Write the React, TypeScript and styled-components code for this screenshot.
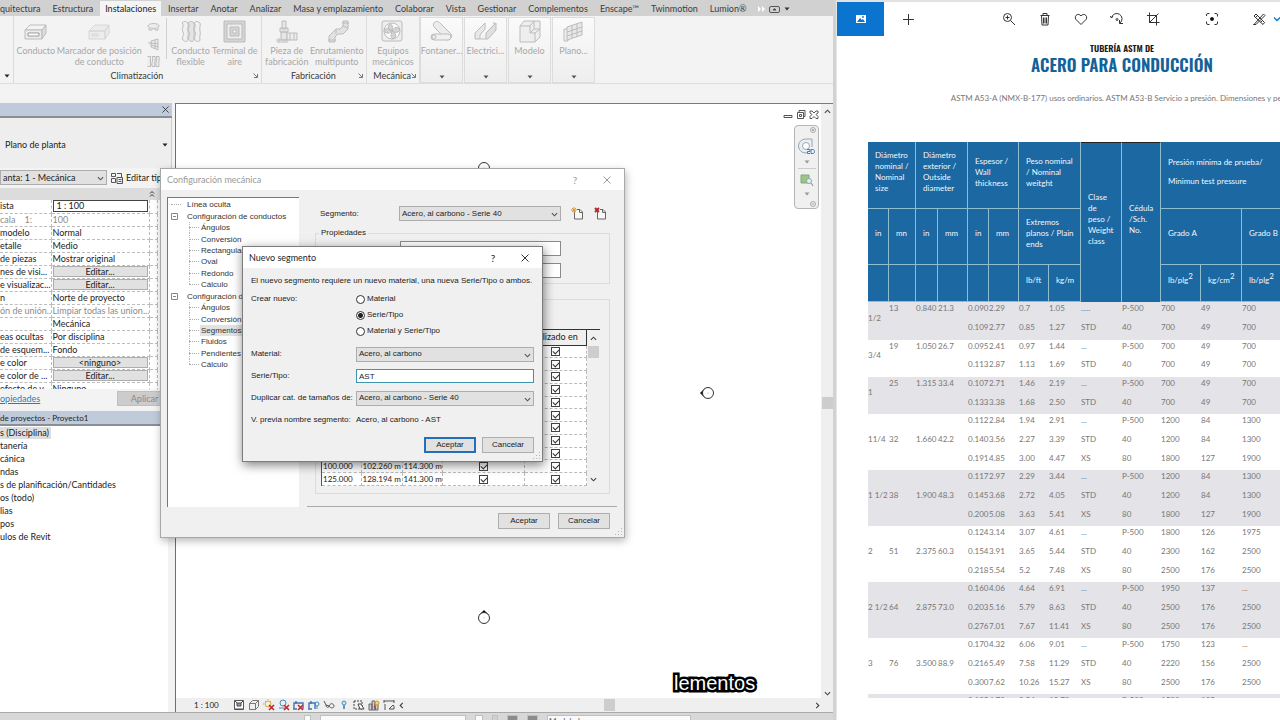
import React from 'react';
import styled, { createGlobalStyle, css } from 'styled-components';

const UI = '"Lato", "Open Sans", sans-serif';
const DIALOG = '"Liberation Sans", sans-serif';
const DOC = '"Lato", "Open Sans", sans-serif';

const Global = createGlobalStyle`
  * { box-sizing: border-box; }
  body { margin: 0; background: #fff; overflow: hidden; }
  button, input, select { font: inherit; color: inherit; margin: 0; padding: 0; border-radius: 0; }
  button { background: none; border: 0; white-space: nowrap; }
  fieldset { margin: 0; padding: 0; min-width: 0; }
  svg { display: block; flex: none; }
`;

const Desktop = styled.div`
  position: relative;
  display: grid;
  grid-template-columns: minmax(0, 836fr) minmax(0, 444fr);
  height: 100vh;
  overflow: hidden;
`;

/* ---------- Revit window ---------- */

const Revit = styled.div`
  display: flex;
  flex-direction: column;
  min-height: 0;
  background: #f3f3f3;
  border-right: 3px solid #d2d2d2;
  font: 9px/12px ${UI};
  color: #222;
  overflow: hidden;
`;

const Tabs = styled.nav`
  display: flex;
  height: 16px;
  flex: none;
  background: #d1d1d1;
  color: #3c3c3c;
`;

const Tab = styled.button<{ $active?: boolean; $first?: boolean }>`
  padding: 2px ${(p) => (p.$active ? 5 : 6)}px 0;
  ${(p) => p.$first && css`padding-left: 0;`}
  margin: ${(p) => (p.$active ? '1px 1px 0' : '0')};
  ${(p) => p.$active && css`background: #f4f4f4; padding-top: 1px; color: #222;`}
`;

const TabTools = styled.div`
  display: flex;
  align-items: center;
  gap: 4px;
  padding: 2px 0 0 6px;
`;

const RibbonBody = styled.div`
  display: flex;
  flex: none;
  height: 68px;
  border-bottom: 1px solid #dedede;
`;

const Panel = styled.section<{ $w: number }>`
  width: ${(p) => p.$w}px;
  flex: none;
  display: flex;
  flex-direction: column;
  border-right: 1px solid #dcdcdc;
`;

const PanelTools = styled.div`
  display: flex;
  flex: 1;
  padding: 4px 2px 0;
`;

const PanelTitle = styled.div`
  display: grid;
  grid-template-columns: 1fr auto 1fr;
  align-items: center;
  height: 13px;
  padding: 0 3px 0 2px;
  margin-bottom: 1px;
  color: #3a3a3a;
  white-space: nowrap;
  svg { justify-self: end; }
`;

const Tool = styled.button<{ $w: number }>`
  width: ${(p) => p.$w}px;
  display: flex;
  flex-direction: column;
  align-items: center;
  color: #a8a8a8;
  line-height: 11px;
  span { margin-top: 1px; white-space: pre; }
`;

const SmallTools = styled.div`
  width: 22px;
  display: flex;
  flex-direction: column;
  align-items: center;
  gap: 4px;
  padding-top: 1px;
`;

const ToolDivider = styled.div`
  width: 1px;
  margin: -2px 4px 10px 1px;
  background: #cfcfcf;
`;

const FoldedPanel = styled.button`
  width: 43px;
  margin: 1px 1px 0 0;
  border: 1px solid #dcdcdc;
  background: linear-gradient(#fafafa, #eeeeee);
  display: flex;
  flex-direction: column;
  align-items: center;
  padding: 2px 0 3px;
  color: #a8a8a8;
  line-height: 11px;
  span { margin: 1px 0 auto; }
`;

const Workspace = styled.div`
  flex: 1;
  min-height: 0;
  margin-top: 19px;
  display: flex;
`;

const Sidebar = styled.aside`
  width: 172px;
  flex: none;
  margin-right: 3px;
  display: flex;
  flex-direction: column;
  overflow: hidden;
  white-space: nowrap;
`;

const PaletteTitle = styled.div`
  height: 15px;
  flex: none;
  display: flex;
  align-items: center;
  justify-content: space-between;
  padding-right: 3px;
  background: #bfcbdb;
  border-bottom: 2px solid #8a8f96;
  font-size: 8px;
`;

const TypeSelector = styled.button`
  height: 50px;
  flex: none;
  display: flex;
  align-items: center;
  justify-content: space-between;
  padding: 4px 3px 0 5px;
  border-right: 1px solid #ccc;
  background: #eee;
`;

const InstanceRow = styled.div`
  display: flex;
  align-items: center;
  height: 20px;
  flex: none;
  background: #f3f3f3;
`;

const InstanceBox = styled.div`
  width: 107px;
  height: 16px;
  margin-right: 4px;
`;

const EditType = styled.button`
  display: flex;
  align-items: center;
  gap: 3px;
`;

const GroupBar = styled.div`
  height: 12px;
  flex: none;
  width: 160px;
  display: flex;
  align-items: center;
  justify-content: flex-end;
  padding-right: 5px;
  background: #dcdcdc;
`;

const PropertyArea = styled.div`
  height: 189px;
  flex: none;
  overflow: hidden;
  background: #fff;
`;

const PropertyTable = styled.table`
  width: 158px;
  table-layout: fixed;
  border-collapse: collapse;
  tr { height: 13px; }
  th, td {
    padding: 0 1px;
    font-weight: normal;
    text-align: left;
    line-height: 12px;
    border: 1px dashed #bdbdbd;
    border-left: 0;
    border-top: 0;
    overflow: hidden;
  }
  th { padding: 0; }
`;

const Dim = styled.span`
  color: #8b8b8b;
  white-space: pre;
`;

const PropertyButton = styled.button`
  display: block;
  width: 100%;
  height: 11px;
  line-height: 9px;
  border: 1px solid #adadad;
  background: #e1e1e1;
`;

const ScaleBox = styled.div`
  height: 12px;
  line-height: 10px;
  border: 1px solid #444;
  padding-left: 3px;
`;

const PaletteFooter = styled.div`
  height: 19px;
  flex: none;
  display: flex;
  align-items: center;
  justify-content: space-between;
  a { color: #2b7cb5; }
`;

const Apply = styled.button`
  width: 55px;
  height: 15px;
  background: #cccccc;
  border: 1px solid #bfbfbf;
  color: #8a8a8a;
`;

const BrowserTitle = styled(PaletteTitle)`
  margin-top: 3px;
`;

const BrowserTree = styled.ul`
  flex: 1;
  margin: 0 4px 0 0;
  padding: 1px 0 0;
  list-style: none;
  background: #fff;
  li { height: 13px; line-height: 12px; }
`;

const Selected = styled.span`
  display: inline-block;
  background: #dedede;
  padding-right: 2px;
`;

const View = styled.main`
  flex: 1;
  min-width: 0;
  display: grid;
  grid-template-columns: 1fr 12px;
  grid-template-rows: 1fr 14px;
  border-left: 1px solid #6e6e6e;
  border-top: 1px solid #7a7a7a;
  background: #efefef;
`;

const Canvas = styled.div`
  position: relative;
  background: #fff;
  overflow: hidden;
`;

const Marker = styled.svg<{ $x: number; $y: number }>`
  position: absolute;
  left: ${(p) => p.$x}px;
  top: ${(p) => p.$y}px;
`;

const ViewWindowTools = styled.div`
  position: absolute;
  top: 6px;
  right: 2px;
  display: flex;
  gap: 3px;
`;

const NavBar = styled.div`
  position: absolute;
  top: 21px;
  right: 2px;
  width: 25px;
  height: 84px;
  display: flex;
  flex-direction: column;
  align-items: center;
  justify-content: space-between;
  padding: 1px 2px;
  border: 1px solid #b5b5b5;
  border-radius: 4px;
  background: #f0f0f0;
  hr { width: 18px; margin: 0; border: 0; border-top: 1px solid #ccc; }
`;

const Corner = styled.div`
  align-self: flex-end;
  line-height: 0;
`;

const VScroll = styled.div`
  display: flex;
  flex-direction: column;
  justify-content: space-between;
  align-items: center;
  padding: 4px 0 1px;
`;

const Thumb = styled.div`
  width: 11px;
  height: 12px;
  background: #cdcdcd;
`;

const ViewControls = styled.div`
  display: flex;
  align-items: center;
  gap: 3px;
  padding-left: 18px;
`;

const ViewScale = styled.span`
  width: 36px;
  font-size: 8px;
`;

const HScroll = styled.div`
  flex: 1;
  display: flex;
  align-items: center;
  justify-content: space-between;
`;

const StatusBar = styled.footer`
  height: 8px;
  flex: none;
  display: flex;
  gap: 9px;
  padding: 2px 0 0 304px;
  border-top: 1px solid #a9a9a9;
  background: #d8d8d8;
  overflow: hidden;
`;

const StatusField = styled.div<{ $w: number; $c?: string }>`
  width: ${(p) => p.$w}px;
  flex: none;
  background: ${(p) => p.$c || '#fafafa'};
  border: 1px solid #c0c0c0;
  border-bottom: 0;
  font-size: 8px;
  line-height: 10px;
  color: #555;
  padding-left: 1px;
`;

/* ---------- Dialogs ---------- */

const Dialog = styled.section<{ $front?: boolean }>`
  position: absolute;
  left: ${(p) => (p.$front ? 242 : 160)}px;
  top: ${(p) => (p.$front ? 246 : 168)}px;
  width: ${(p) => (p.$front ? 301 : 465)}px;
  height: ${(p) => (p.$front ? 216 : 370)}px;
  display: flex;
  flex-direction: column;
  border: 1px solid ${(p) => (p.$front ? '#7c7c7c' : '#a8a8a8')};
  background: #f0f0f0;
  box-shadow: 1px 3px ${(p) => (p.$front ? '10px rgba(0,0,0,0.5)' : '8px rgba(0,0,0,0.28)')};
  font: 8px/12px ${DIALOG};
  color: #222;
  white-space: nowrap;
`;

const DialogTitle = styled.header<{ $dim?: boolean }>`
  height: 21px;
  flex: none;
  display: flex;
  align-items: center;
  padding: 0 12px 0 6px;
  background: #fff;
  color: ${(p) => (p.$dim ? '#999' : '#222')};
  font: 9px/12px ${UI};
  h2 { font: inherit; margin: 0 auto 0 0; }
  button { display: flex; justify-content: center; width: 10px; font-size: 10px; }
  button + button { margin-left: 22px; }
`;

const ConfigBody = styled.div`
  flex: 1;
  display: grid;
  grid-template-columns: 132px 1fr;
  gap: 8px;
  padding: 7px 7px 0 6px;
`;

const Tree = styled.ul`
  height: 310px;
  margin: 0;
  padding: 1px 0 0;
  list-style: none;
  line-height: 11px;
  background: #fff;
  border: solid #777;
  border-width: 1px 0 0 1px;
  display: grid;
  grid-template-rows: repeat(15, minmax(0, 171fr)) 2040fr;
`;

const TreeItem = styled.li<{ $depth: number; $sel?: boolean; $last?: boolean }>`
  display: flex;
  align-items: center;
  padding-left: ${(p) => (p.$depth === 2 ? 21 : 3)}px;
  color: #333;
  &::before {
    content: '';
    width: ${(p) => (p.$depth === 1 ? 0 : 10)}px;
    margin-right: ${(p) => (p.$depth === 0 ? 5 : p.$depth === 2 ? 1 : 0)}px;
    border-top: 1px dotted #aaa;
  }
  ${(p) => p.$depth === 2 && css`
    background: repeating-linear-gradient(#bbb 0 1px, #fff 1px 2px) 21px 0 / 1px ${p.$last ? '50%' : '100%'} no-repeat;
  `}
  span { padding: 0 1px; ${(p) => p.$sel && css`background: #e2e2e2;`} }
  svg { margin-right: 6px; }
`;

const ConfigForm = styled.div`
  display: flex;
  flex-direction: column;
  height: 310px;
  border-bottom: 1px solid #aaa;
`;

const SegmentRow = styled.div`
  display: grid;
  grid-template-columns: 79px 162px auto auto;
  align-items: center;
  justify-content: start;
  height: 15px;
  flex: none;
  margin: 9px 0 6px 13px;
  button { margin-left: 10px; }
`;

const Group = styled.fieldset<{ $h: number }>`
  margin: 0 7px 15px 8px;
  height: ${(p) => p.$h}px;
  flex: none;
  border: 1px solid #dcdcdc;
  legend { padding: 0 2px; margin-left: 3px; height: 12px; }
`;

const GroupFields = styled.div`
  display: grid;
  gap: 7px;
  padding: 2px 48px 0 84px;
`;

const Field = styled.input<{ $focus?: boolean }>`
  display: block;
  width: 100%;
  height: ${(p) => (p.$focus ? 14 : 15)}px;
  border: 1px solid ${(p) => (p.$focus ? '#3d96ad' : '#8a8a8a')};
  padding-left: 2px;
  background: #fff;
  outline: 0;
`;

const SelectWrap = styled.span`
  position: relative;
  display: block;
  height: 15px;
  select {
    display: block;
    width: 100%;
    height: 100%;
    appearance: none;
    border: 1px solid #adadad;
    background: #e1e1e1;
    padding: 0 14px 0 2px;
    line-height: 12px;
  }
  svg { position: absolute; right: 3px; top: 5px; }
`;

const SizeGrid = styled.div`
  display: flex;
  height: 157px;
  margin: 29px 9px 0 5px;
  border-top: 1px solid #333;
  border-left: 1px solid #555;
`;

const SizeTable = styled.table`
  flex: 1;
  width: 100%;
  height: 156px;
  table-layout: fixed;
  border-collapse: collapse;
  background: #fff;
  th {
    height: 15px;
    padding: 0 0 0 16px;
    background: #f0f0f0;
    font: 9px/12px ${UI};
    text-align: left;
    border-bottom: 1px solid #333;
    border-right: 1px solid #333;
  }
  td {
    height: 12px;
    padding: 0 0 0 1px;
    font: 8px/11px ${UI};
    border-right: 1px dashed #bbb;
    border-bottom: 1px dashed #bbb;
    overflow: hidden;
  }
`;

const Check = styled.input`
  display: block;
  appearance: none;
  width: 9px;
  height: 9px;
  margin: 0 auto;
  border: 1px solid #444;
  background: #fff;
  position: relative;
  &:checked::after {
    content: '';
    position: absolute;
    left: 1px;
    top: 1px;
    width: 5px;
    height: 3px;
    border: solid #333;
    border-width: 0 0 1px 1px;
    transform: rotate(-45deg);
  }
`;

const GridScroll = styled.div`
  width: 13px;
  flex: none;
  display: flex;
  flex-direction: column;
  align-items: center;
  padding: 5px 0 3px;
  svg + div { margin: 4px 0 auto; }
`;

const Buttons = styled.div<{ $front?: boolean }>`
  display: flex;
  justify-content: flex-end;
  gap: ${(p) => (p.$front ? 6 : 8)}px;
  padding: ${(p) => (p.$front ? '0 8px 8px 0' : '0 14px 8px 0')};
`;

const PushButton = styled.button<{ $primary?: boolean }>`
  width: 52px;
  height: 16px;
  background: #e1e1e1;
  border: ${(p) => (p.$primary ? '2px solid #2270b8' : '1px solid #adadad')};
`;

const Grip = styled.svg`
  position: absolute;
  right: 1px;
  bottom: 1px;
`;

const SegmentBody = styled.form`
  flex: 1;
  padding: 7px 8px 0;
`;

const Line = styled.div`
  display: grid;
  grid-template-columns: 105px 1fr;
  align-items: center;
  height: 22px;
`;

const RadioRow = styled.div`
  display: grid;
  grid-template-columns: 105px 1fr;
  height: 56px;
  padding-top: 6px;
`;

const Radios = styled.div`
  display: grid;
  grid-auto-rows: 16px;
`;

const RadioLabel = styled.label`
  display: flex;
  align-items: center;
  gap: 2px;
  height: 12px;
  input {
    appearance: none;
    width: 9px;
    height: 9px;
    border: 1px solid #333;
    border-radius: 50%;
    background: #fff;
  }
  input:checked { background: radial-gradient(circle, #222 0 2px, #fff 3px); }
`;

/* ---------- Photo viewer ---------- */

const Photos = styled.div`
  display: flex;
  flex-direction: column;
  min-height: 0;
  border-top: 2px solid #e2e2e2;
  border-left: 1px solid #e6e6e6;
  background: #fff;
  overflow: hidden;
  padding-bottom: 22px;
`;

const PhotoBar = styled.div`
  height: 34px;
  flex: none;
  display: flex;
  align-items: center;
  color: #222;
`;

const PhotoButton = styled.button<{ $w: number; $home?: boolean }>`
  width: ${(p) => p.$w}px;
  flex: none;
  height: 34px;
  display: flex;
  align-items: center;
  justify-content: center;
  ${(p) => p.$home && css`background: #0a74cf; margin-right: 6px;`}
`;

const BarSpace = styled.div<{ $w: number }>`width: ${(p) => p.$w}px; flex: none;`;

const Sheet = styled.article`
  width: 508px;
  margin-left: 31px;
  min-height: 0;
  overflow: hidden;
  font: 8px/11px ${DOC};
  color: #777;
  text-align: center;
`;

const Kicker = styled.p`
  margin: 6px 0 0;
  font: 600 9px/12px "Oswald", "Open Sans Condensed", "Roboto Condensed", ${DIALOG};
  color: #1c1c1c;
`;

const Headline = styled.h1`
  margin: 0;
  font: 600 17px/22px "Oswald", "Open Sans Condensed", "Roboto Condensed", ${DIALOG};
  color: #14629a;
`;

const Intro = styled.p`
  margin: 16px 0 38px;
  line-height: 12px;
  white-space: nowrap;
`;

const SpecTable = styled.table`
  width: 508px;
  table-layout: fixed;
  border-collapse: separate;
  border-spacing: 0;
  text-align: left;
  th {
    padding: 0 2px 6px 7px;
    background: #1b68a3;
    color: #f2f7fb;
    font-weight: normal;
    border-right: 1px solid #8fbfcf;
    border-bottom: 1px solid #8fbfcf;
  }
  th p { margin: 0 0 8px; }
  sup { font-size: 8px; line-height: 0; }
  tbody tr { height: 19px; }
  tbody tr:nth-child(3n) { height: 18px; }
  td { padding: 0; line-height: 12px; vertical-align: top; white-space: nowrap; }
`;

const HeadRow = styled.tr<{ $h: number }>`
  height: ${(p) => p.$h}px;
`;

const Row = styled.tr<{ $shade: boolean }>`
  background: ${(p) => (p.$shade ? '#e3e3e8' : '#fff')};
`;

const SpanCell = styled.td<{ $mid: boolean }>`
  && { ${(p) => p.$mid && css`vertical-align: middle; padding-bottom: 7px;`} }
`;

const TallHead = styled.th`
  && { border-top: 1px solid #222; border-bottom: 0; }
`;

const Caption = styled.div`
  position: absolute;
  left: 674px;
  bottom: 25px;
  font: 20px/24px "Liberation Sans", sans-serif;
  color: #fff;
  -webkit-text-stroke: 5px #000;
  paint-order: stroke fill;
`;

/* ---------- Drawings ---------- */

const Chevron = ({ dir = 'down', c = '#444', s = 7 }: { dir?: string; c?: string; s?: number }) => {
  const d: Record<string, string> = {
    down: 'M1 2.5 4 5.5 7 2.5', up: 'M1 5.5 4 2.5 7 5.5', left: 'M5.5 1 2.5 4 5.5 7', right: 'M2.5 1 5.5 4 2.5 7',
  };
  return <svg width={s} height={s} viewBox="0 0 8 8" fill="none" stroke={c} strokeWidth="1.3"><path d={d[dir]} /></svg>;
};

const Caret = ({ c = '#555' }: { c?: string }) => (
  <svg width="6" height="4" viewBox="0 0 6 4"><path d="M0.5 0.5h5L3 3.5z" fill={c} /></svg>
);

const Cross = ({ c = '#333', s = 8 }: { c?: string; s?: number }) => (
  <svg width={s} height={s} viewBox="0 0 8 8" stroke={c} strokeWidth="1"><path d="M0.5 0.5 7.5 7.5M7.5 0.5 0.5 7.5" /></svg>
);

const Launcher = () => (
  <svg width="5" height="5" viewBox="0 0 5 5" stroke="#777" fill="none"><path d="M0.5 0.5 4 4M4.5 1v3.5H1" /></svg>
);

const ribbonArt: Record<string, React.ReactNode> = {
  duct: <><path d="M1 10 6 5h16l-4 5z" fill="#f4f4f4" /><path d="M1 10h17v9H1z" fill="#ececec" /><path d="M18 10l4-5v8l-4 6z" fill="#ddd" /><path d="M4 13h11v3H4z" fill="#fff" stroke="#999" /></>,
  marker: <g opacity="0.5"><path d="M2 11 8 5h14l-4 6zM2 11h16v8H2zM18 11l4-6v8l-4 6z" fill="#e6e6e6" /><path d="M5 14h6v2H5z" /></g>,
  flex: <><path d="M3 3c3 3-1 5 1 9s-2 5 0 8c2 2 4 2 5 0-1-4 1-5 0-9s1-5 0-8C7 1 5 1 3 3z" fill="#f0f0f0" /><path d="M9 3c3 3-1 5 1 9s-2 5 0 8c2 2 4 2 5 0-1-4 1-5 0-9s1-5 0-8c-2-2-4-2-6 0z" fill="#e4e4e4" /><path d="M15 3c3 3-1 5 1 9s-2 5 0 8c2 2 4 2 5 0-1-4 1-5 0-9s1-5 0-8c-2-2-4-2-6 0z" fill="#f0f0f0" /></>,
  terminal: <><path d="M1 1h21v21H1z" fill="#d4d4d4" /><path d="M4 4h15v15H4z" fill="#eee" /><path d="M7 7h9v9H7z" fill="#d4d4d4" /><path d="M10 10h3v3h-3z" fill="#fff" /></>,
  piece: <><path d="M7 1h4v8H7zM5 8h8v4H5zM6 12h6v8H6z" fill="#e6e6e6" /><path d="M12 13h10v7H12z" fill="#eee" /><path d="M15 13v7M19 13v7M1 20h13M2 22h11M4 18v4" /></>,
  route: <><path d="M18 1h5v8l-5 5h-5l-3 3v5H4v-6l7-7h4l3-3z" fill="#e2e2e2" /><path d="M17 3h7M3 20h8M11 9v5M18 6l5 2" /></>,
  fan: <><rect x="1" y="1" width="20" height="20" rx="2" fill="#eee" /><circle cx="11" cy="11" r="8" fill="#fafafa" /><path d="M11 11c-4-1-5-5-2-7 3 1 3 4 2 7 2-4 6-5 8-1-2 3-5 3-8 1 4 2 5 6 1 8-3-2-2-5-1-8-3 3-7 3-8-1 2-2 5-2 8 1z" fill="#d4d4d4" /></>,
  pipe: <><path d="M4 3c2-3 5-1 6 0l11 11c2 3-1 6-4 6L5 8C3 6 3 4 4 3z" fill="#ececec" /><path d="M4 14h14a3 3 0 0 1 0 6H4a3 3 0 0 1 0-6z" fill="#f0f0f0" /><circle cx="4" cy="17" r="2" /></>,
  tray: <><path d="M1 13 11 3v6L6 15v4H1z" fill="#e8e8e8" /><path d="M6 19h6l9-11V3h-2" fill="#f2f2f2" /><path d="M12 19V13L22 3v7l-8 9z" fill="#e0e0e0" /></>,
  box: <><path d="M2 6 6 1h16v16l-5 5H2z" fill="#eee" /><path d="M2 6h10v7h5v9M12 6l4-5M12 13l4-4h6M16 1v8M17 13l5-4" /></>,
  plane: <><path d="M2 9h4v12H2z" fill="#eee" /><path d="M5 7 20 2v13L5 20z" fill="#e8e8e8" /><path d="M10 5v13M15 4v13M5 12l15-5M5 16l15-5" /></>,
};

const RibbonIcon = ({ name }: { name: string }) => (
  <svg width="24" height="24" viewBox="0 0 24 24" fill="none" stroke="#bcbcbc" strokeWidth="1">{ribbonArt[name]}</svg>
);

const SmallIcon = ({ kind }: { kind: number }) => (
  <svg width="13" height="13" viewBox="0 0 13 13" fill="#ececec" stroke="#bcbcbc">
    {kind === 0 && <><ellipse cx="6.5" cy="5" rx="5.5" ry="2.500" /><path d="M2 7v2h3V8M11 7v2H8V8" /></>}
    {kind === 1 && <path d="M4 3l7-2v11L4 9zM1 5h4M4 5l7 1M4 7l7 2M8 2v9" />}
    {kind === 2 && <path d="M0.500 1.500h3v10h-3M5 1.500c2 3-1 6 0 10h3c-1-4 1-7 0-10zM9 1.500c2 3-1 6 0 10h3c-1-4 1-7 0-10z" />}
  </svg>
);

const viewArt: React.ReactNode[] = [
  <><path d="M1.500 1.500h9v9h-9z" fill="#fff" stroke="#555" /><path d="M2 2l2 2M10 2 8 4M2 10h8M4 4h4v3H4z" fill="#99a" stroke="#445" /></>,
  <path d="M1.500 4.500h6v6h-6zM1.500 4.500l3-3h6v6l-3 3M7.500 4.500l3-3" stroke="#777" />,
  <><circle cx="5" cy="5" r="3" stroke="#e2a82a" /><path d="M5 0v1M0 5h1M2 2l1 1M8 2 7 3" stroke="#e2a82a" /><path d="M6 6l5 5M11 6l-5 5" stroke="#c0282d" strokeWidth="1.6" /></>,
  <><circle cx="5" cy="4" r="3" stroke="#3f8fc4" /><path d="M1 9h7" stroke="#3f8fc4" /><path d="M6 6l5 5M11 6l-5 5" stroke="#c0282d" strokeWidth="1.6" /></>,
  <><path d="M1 10V4h9v6M0 10h4M3 2v3" stroke="#3f78b4" strokeWidth="1.4" /><path d="M5 6l5 5M10 6l-5 5" stroke="#c0282d" strokeWidth="1.6" /></>,
  <><path d="M1 10V4h6v6M0 10h4M3 2v3" stroke="#3f78b4" strokeWidth="1.4" /><circle cx="9" cy="5" r="2" stroke="#3f8fc4" /><path d="M9 7v3" stroke="#3f8fc4" /></>,
  <path d="M1 2l2 4 3 1c2-4 5-2 5 0s-3 3-5 0M3 6c0 3 3 3 3 1" stroke="#555" />,
  <><circle cx="6" cy="4" r="2" stroke="#3f8fc4" fill="#cfe6f5" /><path d="M6 6v4" stroke="#3f78b4" strokeWidth="1.5" /></>,
  <><path d="M1 2h8v8H1z" stroke="#444" strokeDasharray="2 1" /><path d="M5 5h3l3 5H7z" fill="#fff" stroke="#444" /></>,
  <><path d="M1 5h3v6H1zM4 2h3v9H4zM7 4h3v7H7z" fill="#ccc" stroke="#666" /><circle cx="9" cy="4" r="2" fill="#f6d36b" stroke="#d29a28" /><path d="M6 7l2 3" stroke="#c0282d" /></>,
  <path d="M1 2h10M1 1v3M11 1v3M2 5v6M6 10l4-4 1 1v3H6z" stroke="#555" />,
];

const Elevation = ({ x, y, rot, label }: { x: number; y: number; rot: number; label: string }) => (
  <Marker $x={x} $y={y} width="16" height="16" viewBox="0 0 16 16" role="img" aria-label={label}>
    <g transform={`rotate(${rot} 8 8)`}>
      <path d="M3 5 8 0l5 5z" fill="#111" />
      <circle cx="8" cy="8" r="5.500" fill="#fff" stroke="#333" />
      <circle cx="8" cy="8" r="0.500" fill="#888" />
    </g>
  </Marker>
);

const GripDots = () => (
  <Grip width="8" height="8" viewBox="0 0 8 8" fill="#b5b5b5">
    <path d="M6 0h1v1H6zM6 3h1v1H6zM3 3h1v1H3zM6 6h1v1H6zM3 6h1v1H3zM0 6h1v1H0z" />
  </Grip>
);

const PageIcon = ({ remove }: { remove?: boolean }) => (
  <svg width="13" height="14" viewBox="0 0 13 14" fill="none">
    <path d="M3.500 4.500v7.500h8V5L9 2.500H6" fill="#f7f7f7" stroke="#666" />
    <path d="M8.500 2.500V5.500h3" stroke="#666" />
    {remove ? <path d="M1 1l4 4M5 1 1 5" stroke="#b3202a" strokeWidth="1.800" /> : <path d="M3 0v6M0 3h6M1 1l4 4M5 1 1 5" stroke="#e09a3e" />}
  </svg>
);

const Drop = ({ label, value, id }: { label: string; value: string; id: string }) => (
  <SelectWrap>
    <select id={id} aria-label={label} defaultValue={value}><option>{value}</option></select>
    <Chevron c="#555" />
  </SelectWrap>
);

const photoArt: Record<string, React.ReactNode> = {
  home: <><path d="M2 3h10v8H2z" fill="#fff" stroke="none" /><path d="M3 10l3-4 2 2 1-1 2 3z" fill="#0a74cf" stroke="none" /><circle cx="9" cy="5" r="0.900" fill="#0a74cf" stroke="none" /></>,
  plus: <path d="M7.500 2v11M2 7.500h11" />,
  zoom: <><circle cx="5.500" cy="5.500" r="4" /><path d="M8.500 8.500l4.500 4.500M5.500 3.500v4M3.500 5.500h4" /></>,
  trash: <path d="M2.500 3.500h9M5 3.500v-2h4v2M3.500 3.500l0.500 9.500h6l0.500-9.500M5.500 5.500v6M7 5.500v6M8.500 5.500v6" />,
  heart: <path d="M7 12.500 2 7.500C-0.500 4.500 4 0 7 4c3-4 7.500 0.500 5 3.500z" />,
  rotate: <><path d="M1.500 6a5.300 5.300 0 1 1 8.500 5M13 11.500H9.500V8M1.500 6l1.500-2M1.500 6 0 4" /><circle cx="7" cy="7.500" r="1" /></>,
  crop: <path d="M3.500 0.500v10h10M1 3.500h9.500v10M3.500 10.500l9-9" />,
  enhance: <><path d="M1.500 4V3A1.500 1.500 0 0 1 3 1.500h1.500M9.500 1.500H11A1.500 1.500 0 0 1 12.500 3v1.500M12.500 9.500V11a1.500 1.500 0 0 1-1.500 1.500H9.500M4.500 12.500H3A1.500 1.500 0 0 1 1.500 11V9.500" /><circle cx="7" cy="7" r="1.600" fill="#111" /></>,
  edit: <path d="M2 12.500l9.500-10.500 1.500 1.500L4 12.500H1.500zM2 4l2-2 8.500 8.500-1.500 2zM3.500 5.500l1.500-1.500M8.500 10.500l1.500-1.500" />,
};

const PhotoIcon = ({ name }: { name: string }) => (
  <svg width="14" height="14" viewBox="0 0 14 14" fill="none" stroke="#333" strokeWidth="1">{photoArt[name]}</svg>
);

/* ---------- Data ---------- */

const tabs = ['quitectura', 'Estructura', 'Instalaciones', 'Insertar', 'Anotar', 'Analizar', 'Masa y emplazamiento', 'Colaborar', 'Vista', 'Gestionar', 'Complementos', 'Enscape™', 'Twinmotion', 'Lumion®'];

type Prop = [string, string, ('dim' | 'button' | 'box')?];
const properties: Prop[] = [
  ['ista', '1 : 100', 'box'],
  ['cala    1:', '100', 'dim'],
  ['modelo', 'Normal'],
  ['etalle', 'Medio'],
  ['de piezas', 'Mostrar original'],
  ['nes de visi...', 'Editar...', 'button'],
  ['e visualizac...', 'Editar...', 'button'],
  ['n', 'Norte de proyecto'],
  ['ón de unión...', 'Limpiar todas las union...', 'dim'],
  ['', 'Mecánica'],
  ['eas ocultas', 'Por disciplina'],
  ['de esquem...', 'Fondo'],
  ['e color', '<ninguno>', 'button'],
  ['e color de ...', 'Editar...', 'button'],
  ['efecto de v...', 'Ninguno'],
];

const browser = ['tanería', 'cánica', 'ndas', 's de planificación/Cantidades', 'os (todo)', 'lias', 'pos', 'ulos de Revit'];

const tree: [number, string][] = [
  [0, 'Línea oculta'], [1, 'Configuración de conductos'], [2, 'Ángulos'], [2, 'Conversión'], [2, 'Rectangular'], [2, 'Oval'], [2, 'Redondo'], [2, 'Cálculo'],
  [1, 'Configuración de'], [2, 'Ángulos'], [2, 'Conversión'], [2, 'Segmentos y'], [2, 'Fluidos'], [2, 'Pendientes'], [2, 'Cálculo'],
];

const sizes: string[][] = [...Array.from({ length: 9 }, () => ['', '', '']), ['100.000', '102.260 m', '114.300 m'], ['125.000', '128.194 m', '141.300 m']];
const sizeColWidths = [39, 41, 40, 82];

type Spec = { head: [string, string, string, string]; rows: string[][] };
const specs: Spec[] = [
  { head: ['1/2', '13', '0.840', '21.3'], rows: [['0.090', '2.29', '0.7', '1.05', '.....', 'P-500', '700', '49', '700'], ['0.109', '2.77', '0.85', '1.27', 'STD', '40', '700', '49', '700']] },
  { head: ['3/4', '19', '1.050', '26.7'], rows: [['0.095', '2.41', '0.97', '1.44', '...', 'P-500', '700', '49', '700'], ['0.113', '2.87', '1.13', '1.69', 'STD', '40', '700', '49', '700']] },
  { head: ['1', '25', '1.315', '33.4'], rows: [['0.107', '2.71', '1.46', '2.19', '...', 'P-500', '700', '49', '700'], ['0.133', '3.38', '1.68', '2.50', 'STD', '40', '700', '49', '700']] },
  { head: ['11/4', '32', '1.660', '42.2'], rows: [['0.112', '2.84', '1.94', '2.91', '...', 'P-500', '1200', '84', '1300'], ['0.140', '3.56', '2.27', '3.39', 'STD', '40', '1200', '84', '1300'], ['0.191', '4.85', '3.00', '4.47', 'XS', '80', '1800', '127', '1900']] },
  { head: ['1 1/2', '38', '1.900', '48.3'], rows: [['0.117', '2.97', '2.29', '3.44', '...', 'P-500', '1200', '84', '1300'], ['0.145', '3.68', '2.72', '4.05', 'STD', '40', '1200', '84', '1300'], ['0.200', '5.08', '3.63', '5.41', 'XS', '80', '1800', '127', '1900']] },
  { head: ['2', '51', '2.375', '60.3'], rows: [['0.124', '3.14', '3.07', '4.61', '...', 'P-500', '1800', '126', '1975'], ['0.154', '3.91', '3.65', '5.44', 'STD', '40', '2300', '162', '2500'], ['0.218', '5.54', '5.2', '7.48', 'XS', '80', '2500', '176', '2500']] },
  { head: ['2 1/2', '64', '2.875', '73.0'], rows: [['0.160', '4.06', '4.64', '6.91', '...', 'P-500', '1950', '137', '...'], ['0.203', '5.16', '5.79', '8.63', 'STD', '40', '2500', '176', '2500'], ['0.276', '7.01', '7.67', '11.41', 'XS', '80', '2500', '176', '2500']] },
  { head: ['3', '76', '3.500', '88.9'], rows: [['0.170', '4.32', '6.06', '9.01', '...', 'P-500', '1750', '123', '...'], ['0.216', '5.49', '7.58', '11.29', 'STD', '40', '2220', '156', '2500'], ['0.300', '7.62', '10.26', '15.27', 'XS', '80', '2500', '176', '2500']] },
  { head: ['', '', '', ''], rows: [['0.185', '4.78', '9.54', '13.70', '', 'P-500', '1500', '105', '']] },
];
const colWidths = [21, 27, 22, 30, 21, 30, 30, 32, 41, 39, 40, 41];

/* ---------- Page ---------- */

const Ribbon = () => (
  <>
    <Tabs>
      {tabs.map((t, i) => <Tab key={t} $active={i === 2} $first={i === 0}>{t}</Tab>)}
      <TabTools>
        <svg width="7" height="6" viewBox="0 0 7 6" fill="#fff"><path d="M0 0l3 3-3 3zM4 0l3 3-3 3z" /></svg>
        <svg width="11" height="7" viewBox="0 0 11 7" fill="none" stroke="#555"><rect x="0.500" y="0.500" width="10" height="6" rx="1.500" /><path d="M4 4l1.500-1.500L7 4z" fill="#333" /></svg>
        <Caret c="#333" />
      </TabTools>
    </Tabs>
    <RibbonBody>
      <Panel $w={14}>
        <PanelTools />
        <PanelTitle><i /><i /><Caret c="#222" /></PanelTitle>
      </Panel>
      <Panel $w={248}>
        <PanelTools>
          <Tool $w={40}><RibbonIcon name="duct" /><span>Conducto</span></Tool>
          <Tool $w={88}><RibbonIcon name="marker" /><span>{'Marcador de posición\nde conducto'}</span></Tool>
          <SmallTools><SmallIcon kind={0} /><SmallIcon kind={1} /><SmallIcon kind={2} /></SmallTools>
          <ToolDivider />
          <Tool $w={40}><RibbonIcon name="flex" /><span>{'Conducto\nflexible'}</span></Tool>
          <Tool $w={49}><RibbonIcon name="terminal" /><span>{'Terminal de\naire'}</span></Tool>
        </PanelTools>
        <PanelTitle><i />Climatización<Launcher /></PanelTitle>
      </Panel>
      <Panel $w={105}>
        <PanelTools>
          <Tool $w={46}><RibbonIcon name="piece" /><span>{'Pieza de\nfabricación'}</span></Tool>
          <Tool $w={55}><RibbonIcon name="route" /><span>{'Enrutamiento\nmultipunto'}</span></Tool>
        </PanelTools>
        <PanelTitle><i />Fabricación<Launcher /></PanelTitle>
      </Panel>
      <Panel $w={53}>
        <PanelTools>
          <Tool $w={48}><RibbonIcon name="fan" /><span>{'Equipos\nmecánicos'}</span></Tool>
        </PanelTools>
        <PanelTitle><i />Mecánica<Launcher /></PanelTitle>
      </Panel>
      {[['pipe', 'Fontaner...'], ['tray', 'Electrici...'], ['box', 'Modelo'], ['plane', 'Plano...']].map(([icon, name]) => (
        <FoldedPanel key={name}><RibbonIcon name={icon} /><span>{name}</span><Caret /></FoldedPanel>
      ))}
    </RibbonBody>
  </>
);

const Properties = () => (
  <>
    <PaletteTitle><span /><button aria-label="Cerrar propiedades"><Cross s={7} /></button></PaletteTitle>
    <TypeSelector>Plano de planta<Caret c="#222" /></TypeSelector>
    <InstanceRow>
      <InstanceBox><Drop id="instance" label="Instancia" value="anta: 1 - Mecánica" /></InstanceBox>
      <EditType>
        <svg width="12" height="12" viewBox="0 0 12 12" fill="#f4f4f4" stroke="#555"><path d="M0.500 1.500h4v3h-4zM0.500 6.500h4v4h-4zM6 1.500h4.500V5M6 5.500h5.500v6H6zM7.500 7.500h3M7.500 9.500h3" /></svg>
        Editar tipo
      </EditType>
    </InstanceRow>
    <GroupBar>
      <svg width="6" height="8" viewBox="0 0 6 8" fill="none" stroke="#333"><path d="M1 3.500l2-2 2 2M1 6.500l2-2 2 2" /></svg>
    </GroupBar>
    <PropertyArea>
      <PropertyTable>
        <colgroup><col style={{ width: 51 }} /><col style={{ width: 98 }} /><col /></colgroup>
        <tbody>
          {properties.map(([name, value, kind], i) => (
            <tr key={i}>
              <th scope="row">{kind === 'dim' ? <Dim>{name}</Dim> : name}</th>
              <td>
                {kind === 'button' ? <PropertyButton>{value}</PropertyButton>
                  : kind === 'box' ? <ScaleBox>{value}</ScaleBox>
                  : kind === 'dim' ? <Dim>{value}</Dim> : value}
              </td>
              <td />
            </tr>
          ))}
        </tbody>
      </PropertyTable>
    </PropertyArea>
    <PaletteFooter><a href="#propiedades">opiedades</a><Apply>Aplicar</Apply></PaletteFooter>
    <BrowserTitle>de proyectos - Proyecto1</BrowserTitle>
    <BrowserTree>
      <li><Selected>s (Disciplina)</Selected></li>
      {browser.map((b) => <li key={b}>{b}</li>)}
    </BrowserTree>
  </>
);

const DrawingView = () => (
  <View>
    <Canvas>
      <Elevation x={300} y={56} rot={180} label="Alzado norte" />
      <Elevation x={524} y={281} rot={270} label="Alzado este" />
      <Elevation x={300} y={506} rot={0} label="Alzado sur" />
      <ViewWindowTools>
        <svg width="10" height="9" viewBox="0 0 10 9" fill="none" stroke="#555"><path d="M1 5.500h8v2H1z" /></svg>
        <svg width="10" height="9" viewBox="0 0 10 9" fill="none" stroke="#555"><path d="M1.500 2.500h6v6h-6zM3 2.500V0.500h6v6H8M3.500 4.500h2v2h-2z" /></svg>
        <svg width="10" height="9" viewBox="0 0 10 9" fill="none" stroke="#555"><path d="M1 1h2l2 2 2-2h2v2L7 4.500 9 6.500v2H7l-2-2-2 2H1v-2l2-2L1 3z" /></svg>
      </ViewWindowTools>
      <NavBar>
        <Corner><svg width="6" height="6" viewBox="0 0 6 6" fill="none" stroke="#aaa"><circle cx="3" cy="3" r="2.500" /><path d="M2 2l2 2M4 2 2 4" /></svg></Corner>
        <svg width="18" height="17" viewBox="0 0 18 17" fill="none" stroke="#95a8b8"><path d="M8 1h6v8M8 1a7 7 0 1 0 2 13.500" fill="#e9eef2" /><circle cx="8" cy="8" r="3.500" fill="#fff" /><path d="M9 11.500h3v2H9.500v2H12M13 11.500h2c2 0 2 4 0 4h-2z" stroke="#4a7db5" /></svg>
        <Caret c="#999" />
        <hr />
        <svg width="14" height="13" viewBox="0 0 14 13"><path d="M1 1h8v8H1z" fill="#9cc488" stroke="#7fab6b" /><circle cx="9" cy="7" r="2.500" fill="#e5f0f6" stroke="#8aa" /><path d="M11 9l2 3" stroke="#789" /></svg>
        <Caret c="#999" />
        <Corner><svg width="6" height="6" viewBox="0 0 6 6" fill="none" stroke="#aaa"><circle cx="3" cy="3" r="2.500" /><path d="M1.500 3h3" /></svg></Corner>
      </NavBar>
    </Canvas>
    <VScroll><Chevron dir="up" /><Thumb /><Chevron dir="down" /></VScroll>
    <ViewControls>
      <ViewScale>1 : 100</ViewScale>
      {viewArt.map((art, i) => <svg key={i} width="12" height="12" viewBox="0 0 12 12" fill="none">{art}</svg>)}
      <HScroll><Chevron dir="left" /><Thumb /><Chevron dir="right" /></HScroll>
    </ViewControls>
    <span />
  </View>
);

const ConfigDialog = () => (
  <Dialog aria-label="Configuración mecánica">
    <DialogTitle $dim><h2>Configuración mecánica</h2><button>?</button><button aria-label="Cerrar"><Cross c="#999" /></button></DialogTitle>
    <ConfigBody>
      <Tree>
        {tree.map(([depth, name], i) => (
          <TreeItem key={i} $depth={depth} $sel={i === 11} $last={i === 7 || i === 14}>
            {depth === 1 && <svg width="9" height="7" viewBox="0 0 9 7" fill="#fff" stroke="#888"><path d="M0.500 0.500h6v6h-6zM2 3.500h3" /></svg>}
            <span>{name}</span>
          </TreeItem>
        ))}
      </Tree>
      <ConfigForm>
        <SegmentRow>
          <label htmlFor="segment">Segmento:</label>
          <Drop id="segment" label="Segmento" value="Acero, al carbono - Serie 40" />
          <button aria-label="Nuevo segmento"><PageIcon /></button>
          <button aria-label="Suprimir segmento"><PageIcon remove /></button>
        </SegmentRow>
        <Group $h={57}>
          <legend>Propiedades</legend>
          <GroupFields>
            <Field aria-label="Rugosidad" defaultValue="0.04572" />
            <Field aria-label="Descripción de segmento" />
          </GroupFields>
        </Group>
        <Group $h={195}>
          <SizeGrid>
            <SizeTable>
              <colgroup>{sizeColWidths.map((w, i) => <col key={i} style={{ width: w }} />)}<col /></colgroup>
              <thead><tr><th /><th /><th /><th /><th>ilizado en</th></tr></thead>
              <tbody>
                {sizes.map((r, i) => (
                  <tr key={i}>
                    {r.map((v, j) => <td key={j}>{v}</td>)}
                    <td><Check type="checkbox" defaultChecked aria-label="Utilizado en listas" /></td>
                    <td><Check type="checkbox" defaultChecked aria-label="Utilizado en tamaño" /></td>
                  </tr>
                ))}
              </tbody>
            </SizeTable>
            <GridScroll><Chevron dir="up" /><Thumb /><Chevron dir="down" /></GridScroll>
          </SizeGrid>
        </Group>
      </ConfigForm>
    </ConfigBody>
    <Buttons><PushButton>Aceptar</PushButton><PushButton>Cancelar</PushButton></Buttons>
    <GripDots />
  </Dialog>
);

const SegmentDialog = () => (
  <Dialog $front aria-label="Nuevo segmento">
    <DialogTitle><h2>Nuevo segmento</h2><button>?</button><button aria-label="Cerrar"><Cross /></button></DialogTitle>
    <SegmentBody onSubmit={(e) => e.preventDefault()}>
      El nuevo segmento requiere un nuevo material, una nueva Serie/Tipo o ambos.
      <RadioRow>
        <span>Crear nuevo:</span>
        <Radios>
          {['Material', 'Serie/Tipo', 'Material y Serie/Tipo'].map((r, i) => (
            <RadioLabel key={r}><input type="radio" name="create" defaultChecked={i === 1} />{r}</RadioLabel>
          ))}
        </Radios>
      </RadioRow>
      <Line><label htmlFor="material">Material:</label><Drop id="material" label="Material" value="Acero, al carbono" /></Line>
      <Line><label htmlFor="serie">Serie/Tipo:</label><Field id="serie" $focus defaultValue="AST" /></Line>
      <Line><label htmlFor="dup">Duplicar cat. de tamaños de:</label><Drop id="dup" label="Duplicar" value="Acero, al carbono - Serie 40" /></Line>
      <Line><span>V. previa nombre segmento:</span><span>Acero, al carbono - AST</span></Line>
    </SegmentBody>
    <Buttons $front><PushButton $primary>Aceptar</PushButton><PushButton>Cancelar</PushButton></Buttons>
    <GripDots />
  </Dialog>
);

const PhotoViewer = () => (
  <Photos>
    <PhotoBar>
      <PhotoButton $w={47} $home aria-label="Inicio"><PhotoIcon name="home" /></PhotoButton>
      <PhotoButton $w={36} aria-label="Agregar"><PhotoIcon name="plus" /></PhotoButton>
      <BarSpace $w={65} />
      {['zoom', 'trash', 'heart', 'rotate', 'crop'].map((n) => <PhotoButton key={n} $w={36} aria-label={n}><PhotoIcon name={n} /></PhotoButton>)}
      <BarSpace $w={22} />
      <PhotoButton $w={38} aria-label="Mejorar"><PhotoIcon name="enhance" /></PhotoButton>
      <BarSpace $w={14} />
      <PhotoButton $w={28} aria-label="Editar"><PhotoIcon name="edit" /></PhotoButton>
      <Chevron c="#0a74cf" s={8} />
    </PhotoBar>
    <Sheet>
      <Kicker>TUBERÍA ASTM DE</Kicker>
      <Headline>ACERO PARA CONDUCCIÓN</Headline>
      <Intro>ASTM A53-A (NMX-B-177) usos ordinarios. ASTM A53-B Servicio a presión. Dimensiones y pesos</Intro>
      <SpecTable>
        <colgroup>{colWidths.map((w, i) => <col key={i} style={{ width: w }} />)}<col /></colgroup>
        <thead>
          <HeadRow $h={67}>
            <th colSpan={2}>Diámetro nominal / Nominal size</th>
            <th colSpan={2}>Diámetro exterior / Outside diameter</th>
            <th colSpan={2}>Espesor / Wall thickness</th>
            <th colSpan={2}>Peso nominal<br />/ Nominal weitght</th>
            <TallHead rowSpan={3}>Clase<br />de<br />peso /<br />Weight<br />class</TallHead>
            <TallHead rowSpan={3}>Cédula<br />/Sch.<br />No.</TallHead>
            <th colSpan={3}><p>Presión mínima de prueba/</p>Minimun test pressure</th>
          </HeadRow>
          <HeadRow $h={56}>
            <th>in</th><th>mn</th><th>in</th><th>mm</th><th>in</th><th>mm</th>
            <th colSpan={2}>Extremos planos / Plain ends</th>
            <th colSpan={2}>Grado A</th><th>Grado B</th>
          </HeadRow>
          <HeadRow $h={37}>
            <th /><th /><th /><th /><th /><th />
            <th>lb/ft</th><th>kg/m</th>
            <th>lb/plg<sup>2</sup></th><th>kg/cm<sup>2</sup></th><th>lb/plg<sup>2</sup></th>
          </HeadRow>
        </thead>
        <tbody>
          {specs.map((g, gi) => g.rows.map((r, ri) => (
            <Row key={`${gi}-${ri}`} $shade={gi % 2 === 0}>
              {ri === 0 && g.head.map((h, hi) => (
                <SpanCell key={hi} rowSpan={g.rows.length} $mid={hi === 0 || g.rows.length === 3}>{h}</SpanCell>
              ))}
              {r.map((v, vi) => <td key={vi}>{v}</td>)}
            </Row>
          )))}
        </tbody>
      </SpecTable>
    </Sheet>
  </Photos>
);

export default function App() {
  return (
    <>
      <Global />
      <Desktop>
        <Revit>
          <Ribbon />
          <Workspace>
            <Sidebar><Properties /></Sidebar>
            <DrawingView />
          </Workspace>
          <StatusBar>
            <StatusField $w={7} />
            <StatusField $w={146} />
            <StatusField $w={8} />
            <StatusField $w={6} $c="#d0d0d0" />
            <StatusField $w={11} $c="#8c8c8c" />
            <StatusField $w={11} $c="#8c8c8c" />
            <StatusField $w={144}>Modelo base</StatusField>
          </StatusBar>
        </Revit>
        <PhotoViewer />
        <ConfigDialog />
        <SegmentDialog />
        <Caption>lementos</Caption>
      </Desktop>
    </>
  );
}
